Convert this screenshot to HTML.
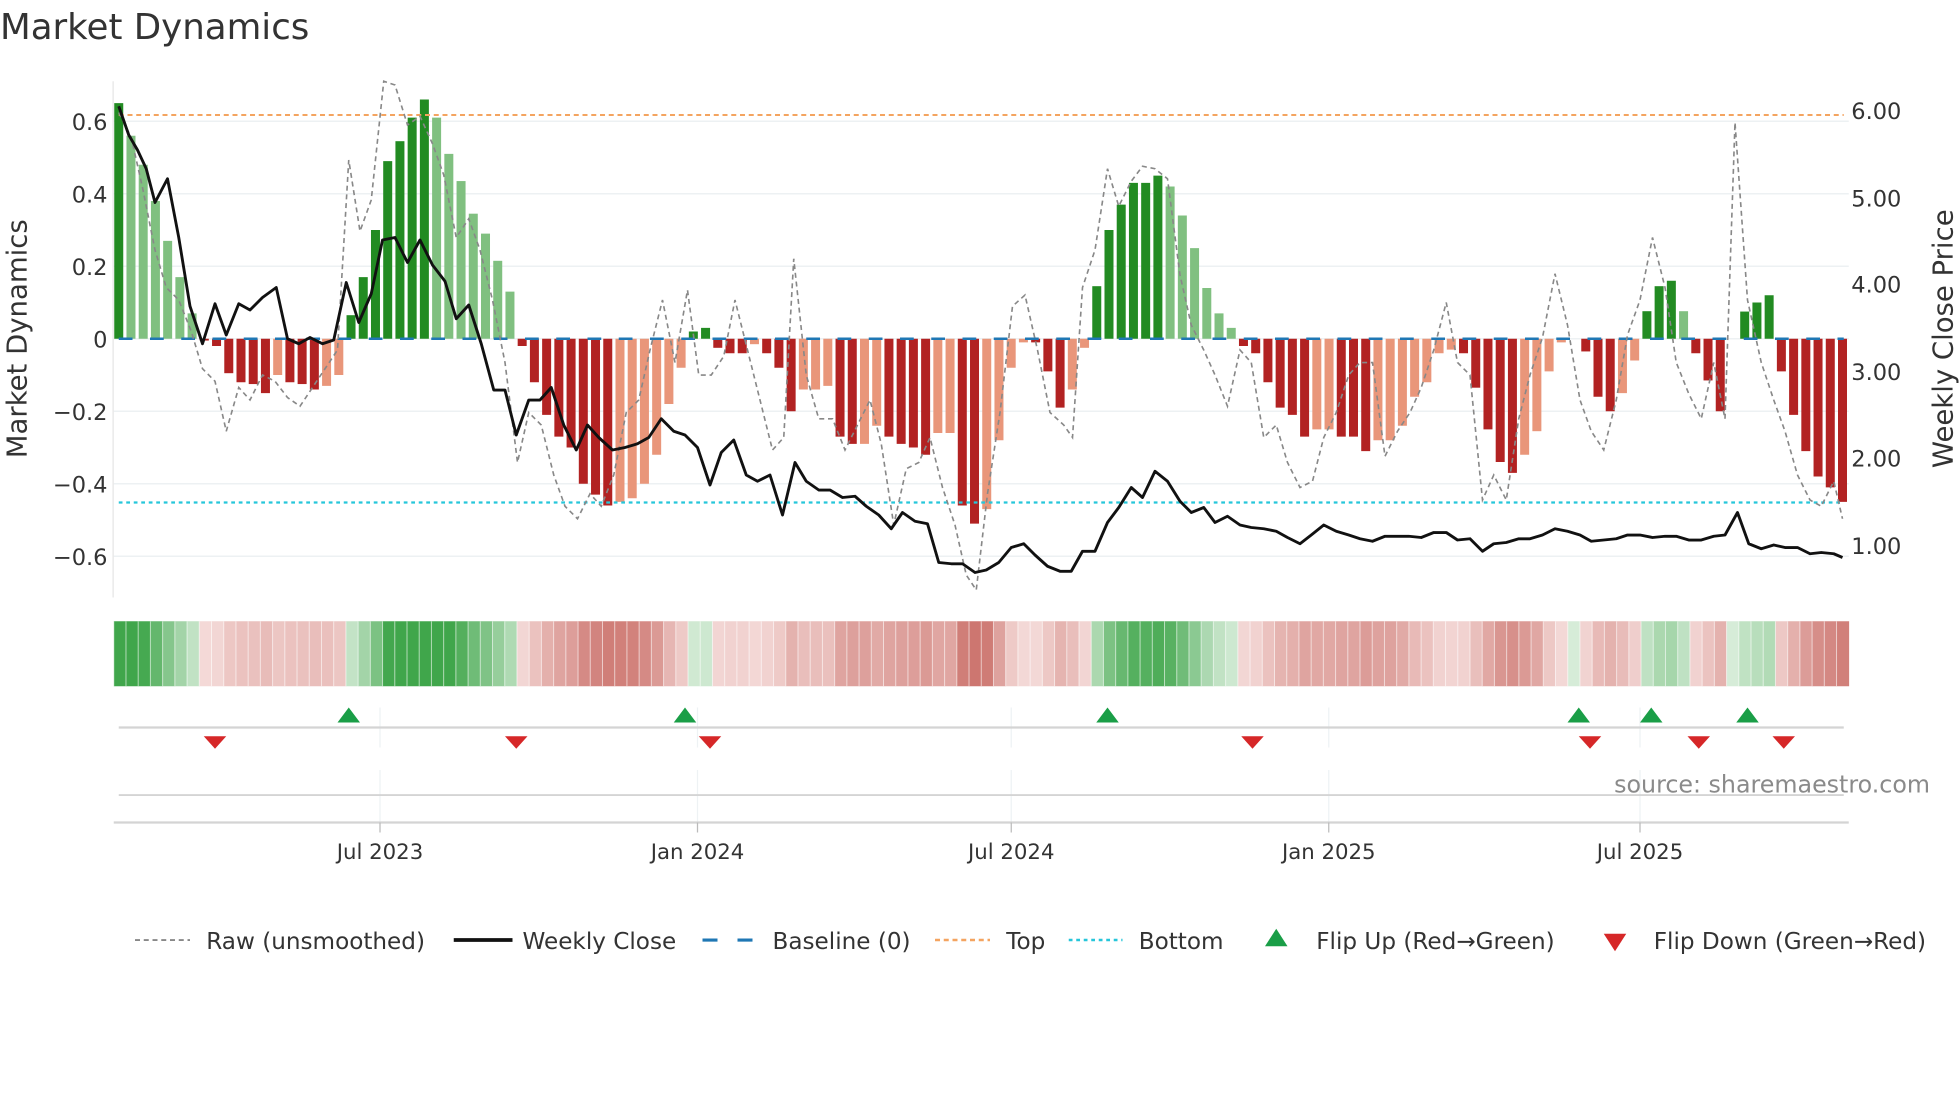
<!DOCTYPE html>
<html><head><meta charset="utf-8">
<style>
html,body{margin:0;padding:0;background:#fff;}
svg{display:block;}
text{font-family:"DejaVu Sans","Liberation Sans",sans-serif;fill:#333;}
</style></head>
<body>
<svg id="s" width="1960" height="1102" viewBox="0 0 1568 881.6" xmlns="http://www.w3.org/2000/svg">
<text x="0" y="31" font-size="28.5">Market Dynamics</text>
<g id="grid"></g>
<line x1="90.5" y1="65" x2="90.5" y2="478" stroke="#e6e6e6" stroke-width="1"/>
<g id="bars"></g>
<line x1="95" y1="92" x2="1475" y2="92" stroke="#f4a460" stroke-width="1.6" stroke-dasharray="4,3"/>
<line x1="95" y1="402" x2="1475" y2="402" stroke="#26c6da" stroke-width="1.8" stroke-dasharray="3,3"/>
<line x1="95" y1="271" x2="1475" y2="271" stroke="#1f77b4" stroke-width="2" stroke-dasharray="11,14"/>
<polyline id="raw" fill="none" stroke="#888" stroke-width="1.3" stroke-dasharray="4,3"/>
<polyline id="close" fill="none" stroke="#111" stroke-width="2.3" stroke-linejoin="round"/>
<g font-size="18" text-anchor="end">
<text x="86" y="104">0.6</text><text x="86" y="162">0.4</text><text x="86" y="220">0.2</text>
<text x="86" y="278">0</text><text x="86" y="336">−0.2</text><text x="86" y="394">−0.4</text><text x="86" y="452">−0.6</text>
</g>
<g font-size="18">
<text x="1481" y="95">6.00</text><text x="1481" y="165">5.00</text><text x="1481" y="234">4.00</text>
<text x="1481" y="304">3.00</text><text x="1481" y="373">2.00</text><text x="1481" y="443">1.00</text>
</g>
<text transform="translate(21,271) rotate(-90)" font-size="22" text-anchor="middle">Market Dynamics</text>
<text transform="translate(1562,271) rotate(-90)" font-size="22" text-anchor="middle">Weekly Close Price</text>
<g id="heat"></g>
<g stroke="#eef2f4" stroke-width="1">
<line x1="304" y1="566" x2="304" y2="598"/><line x1="558" y1="566" x2="558" y2="598"/><line x1="809" y1="566" x2="809" y2="598"/><line x1="1063" y1="566" x2="1063" y2="598"/><line x1="1312" y1="566" x2="1312" y2="598"/>
<line x1="304" y1="616" x2="304" y2="658"/><line x1="558" y1="616" x2="558" y2="658"/><line x1="809" y1="616" x2="809" y2="658"/><line x1="1063" y1="616" x2="1063" y2="658"/><line x1="1312" y1="616" x2="1312" y2="658"/>
</g>
<line x1="95" y1="582" x2="1475" y2="582" stroke="#d4d4d4" stroke-width="1.8"/>
<line x1="95" y1="636" x2="1475" y2="636" stroke="#d4d4d4" stroke-width="1.5"/>
<line x1="91" y1="658" x2="1479" y2="658" stroke="#d4d4d4" stroke-width="1.8"/>
<g stroke="#bbb" stroke-width="1">
<line x1="304" y1="658" x2="304" y2="666"/><line x1="558" y1="658" x2="558" y2="666"/><line x1="809" y1="658" x2="809" y2="666"/><line x1="1063" y1="658" x2="1063" y2="666"/><line x1="1312" y1="658" x2="1312" y2="666"/>
</g>
<g id="flips"></g>
<text x="1544" y="634" font-size="19" text-anchor="end" style="fill:#8a8a8a">source: sharemaestro.com</text>
<g font-size="17" text-anchor="middle">
<text x="304" y="687">Jul 2023</text><text x="558" y="687">Jan 2024</text><text x="809" y="687">Jul 2024</text><text x="1063" y="687">Jan 2025</text><text x="1312" y="687">Jul 2025</text>
</g>
<g font-size="18.5">
<line x1="108" y1="752" x2="152" y2="752" stroke="#888" stroke-width="1.5" stroke-dasharray="4,3"/>
<text x="165" y="759">Raw (unsmoothed)</text>
<line x1="363" y1="752" x2="410" y2="752" stroke="#111" stroke-width="3"/>
<text x="418" y="759">Weekly Close</text>
<line x1="562" y1="752" x2="606" y2="752" stroke="#1f77b4" stroke-width="2.5" stroke-dasharray="12,16"/>
<text x="618" y="759">Baseline (0)</text>
<line x1="748" y1="752" x2="792" y2="752" stroke="#f4a460" stroke-width="2" stroke-dasharray="4,3"/>
<text x="805" y="759">Top</text>
<line x1="855" y1="752" x2="898" y2="752" stroke="#26c6da" stroke-width="2" stroke-dasharray="3,3"/>
<text x="911" y="759">Bottom</text>
<polygon points="1021,743 1030,757 1012,757" fill="#1a9e47"/>
<text x="1053" y="759">Flip Up (Red→Green)</text>
<polygon points="1283,747 1301,747 1292,761" fill="#d62728"/>
<text x="1323" y="759">Flip Down (Green→Red)</text>
</g>
</svg>
<script>
(function(){
var NS="http://www.w3.org/2000/svg";
function el(t,a,p){var e=document.createElementNS(NS,t);for(var k in a)e.setAttribute(k,a[k]);p.appendChild(e);return e;}
var g=document.getElementById('grid');
[97,155,213,271,329,387,445].forEach(function(y){el('line',{x1:91,x2:1479,y1:y,y2:y,stroke:'#edf1f3','stroke-width':1.2},g);});
var V=[[.65,0],[.56,1],[.48,1],[.38,1],[.27,1],[.17,1],[.07,1],[-.005,0],[-.02,0],[-.095,0],[-.12,0],[-.125,0],[-.15,0],[-.10,1],[-.12,0],[-.125,0],[-.14,0],[-.13,1],[-.10,1],
[.065,0],[.17,0],[.30,0],[.49,0],[.545,0],[.61,0],[.66,0],[.61,1],[.51,1],[.435,1],[.345,1],[.29,1],[.215,1],[.13,1],
[-.02,0],[-.12,0],[-.21,0],[-.27,0],[-.30,0],[-.40,0],[-.43,0],[-.46,0],[-.45,1],[-.44,1],[-.40,1],[-.32,1],[-.18,1],[-.08,1],
[.02,0],[.03,0],[-.025,0],[-.04,0],[-.04,0],[-.015,1],[-.04,0],[-.08,0],[-.2,0],[-.14,1],[-.14,1],[-.13,1],[-.27,0],[-.29,0],[-.29,1],[-.24,1],
[-.27,0],[-.29,0],[-.30,0],[-.32,0],[-.26,1],[-.26,1],[-.46,0],
[-.51,0],[-.47,1],[-.28,1],[-.08,1],[-.01,1],[-.01,0],[-.09,0],[-.19,0],[-.14,1],[-.025,1],[.145,0],[.30,0],[.37,0],[.43,0],[.43,0],[.45,0],[.42,1],[.34,1],[.25,1],[.14,1],[.07,1],[.03,1],
[-.02,0],[-.04,0],[-.12,0],[-.19,0],[-.21,0],[-.27,0],[-.25,1],[-.25,1],[-.27,0],[-.27,0],[-.31,0],[-.28,1],[-.28,1],[-.24,1],[-.16,1],[-.12,1],[-.04,1],[-.03,1],
[-.04,0],[-.135,0],[-.25,0],[-.34,0],[-.37,0],[-.32,1],[-.255,1],[-.09,1],[-.01,1],[0,1],[-.035,0],[-.16,0],[-.20,0],[-.15,1],[-.06,1],
[.076,0],[.145,0],[.16,0],[.076,1],[-.04,0],[-.115,0],[-.2,0],[0,0],[.075,0],[.10,0],[.12,0],[-.09,0],[-.21,0],[-.31,0],[-.38,0],[-.41,0],[-.45,0]];
var n=V.length, x0=95, x1=1474, sp=(x1-x0)/(n-1);
var b=document.getElementById('bars'), h=document.getElementById('heat');
function mix(a,c,t){return 'rgb('+[0,1,2].map(function(i){return Math.round(a[i]+(c[i]-a[i])*t);}).join(',')+')';}
var hx0=91, hw=(1479-91)/n;
V.forEach(function(d,i){
 var v=d[0],x=x0+sp*i,y0=271,y=271-290*v;
 var col=v>=0?(d[1]?'#80c080':'#228b22'):(d[1]?'#e9967a':'#b22222');
 if(Math.abs(v)>0.003) el('rect',{x:x-3.6,y:Math.min(y,y0),width:7.2,height:Math.abs(y-y0),fill:col},b);
 var t=Math.min(1,Math.abs(v)/0.5);
 var c=v>=0?mix([214,236,216],[64,166,75],t):mix([244,218,216],[205,118,112],t);
 el('rect',{x:hx0+hw*i,y:497,width:hw+0.3,height:52,fill:c},h);
 el('line',{x1:hx0+hw*i,x2:hx0+hw*i,y1:497,y2:549,stroke:'#fff','stroke-width':0.8,'stroke-opacity':0.6},h);
});
var C=[[95,85],[103,108],[110,120],[117,135],[124,162],[134,143],[143,190],[152,245],[162,275],[172,243],[181,268],[191,243],[200,248],[210,238],[221,230],[230,271],[239,275],[248,270],[258,275],[267,272],[277,226],[287,258],[297,235],[306,192],[316,190],[326,210],[336,192],[346,212],[356,225],[365,255],[375,244],[385,275],[395,312],[404,312],[413,348],[423,320],[432,320],[441,310],[451,340],[461,360],[470,340],[479,350],[490,360],[500,358],[510,355],[519,350],[529,335],[539,345],[548,348],[558,358],[568,388],[577,362],[587,352],[597,380],[606,385],[616,380],[626,412],[636,370],[645,385],[655,392],[664,392],[674,398],[684,397],[693,405],[703,412],[713,423],[722,410],[732,417],[742,419],[751,450],[761,451],[770,451],[780,458],[789,456],[799,450],[809,438],[819,435],[828,444],[838,453],[848,457],[857,457],[866,441],[876,441],[886,418],[895,406],[905,390],[914,398],[924,377],[934,385],[944,401],[953,410],[963,406],[972,418],[982,413],[992,420],[1001,422],[1011,423],[1021,425],[1030,430],[1040,435],[1049,428],[1059,420],[1069,425],[1079,428],[1088,431],[1098,433],[1108,429],[1118,429],[1127,429],[1137,430],[1147,426],[1157,426],[1166,432],[1176,431],[1186,441],[1195,435],[1205,434],[1215,431],[1224,431],[1234,428],[1244,423],[1254,425],[1264,428],[1273,433],[1283,432],[1293,431],[1302,428],[1312,428],[1322,430],[1332,429],[1341,429],[1351,432],[1361,432],[1371,429],[1380,428],[1390,410],[1399,435],[1409,439],[1419,436],[1428,438],[1438,438],[1448,443],[1457,442],[1467,443],[1474,446]];
document.getElementById('close').setAttribute('points',C.map(function(p){return p.join(',');}).join(' '));
var R=[[95,90],[105,110],[114,150],[124,200],[133,230],[143,240],[153,265],[162,295],[172,305],[181,345],[191,310],[200,320],[210,300],[220,305],[230,318],[240,325],[250,310],[260,295],[270,280],[279,128],[288,185],[297,160],[307,65],[316,68],[326,100],[336,93],[346,115],[355,140],[365,190],[375,175],[384,200],[394,240],[404,290],[414,370],[423,330],[433,340],[443,380],[452,405],[462,415],[472,395],[481,405],[491,380],[501,330],[511,320],[520,280],[530,240],[540,290],[550,232],[559,300],[569,300],[579,285],[588,240],[598,280],[608,320],[618,360],[627,350],[635,207],[645,300],[655,335],[666,335],[676,360],[686,340],[696,320],[705,355],[715,420],[725,375],[735,370],[744,350],[754,390],[764,420],[773,460],[781,472],[790,395],[800,330],[810,245],[820,236],[830,280],[840,330],[851,340],[858,350],[866,230],[876,200],[886,135],[895,165],[905,145],[914,133],[924,135],[934,143],[944,220],[953,260],[963,280],[972,300],[982,325],[992,280],[1001,290],[1011,350],[1021,340],[1030,370],[1040,390],[1050,385],[1059,350],[1069,330],[1079,300],[1088,290],[1098,290],[1108,365],[1118,345],[1128,330],[1137,310],[1147,280],[1157,242],[1166,290],[1176,300],[1186,400],[1195,380],[1205,400],[1215,335],[1224,300],[1234,270],[1244,219],[1254,260],[1264,320],[1273,345],[1283,360],[1293,320],[1302,268],[1312,240],[1322,190],[1332,230],[1341,290],[1351,315],[1361,335],[1371,290],[1380,335],[1388,98],[1398,240],[1409,290],[1419,320],[1428,345],[1438,380],[1448,400],[1457,405],[1467,385],[1474,415]];
document.getElementById('raw').setAttribute('points',R.map(function(p){return p.join(',');}).join(' '));
var f=document.getElementById('flips');
[279,548,886,1263,1321,1398].forEach(function(x){el('polygon',{points:(x)+',566 '+(x+9)+',578 '+(x-9)+',578',fill:'#1a9e47'},f);});
[172,413,568,1002,1272,1359,1427].forEach(function(x){el('polygon',{points:(x-9)+',589 '+(x+9)+',589 '+x+',599',fill:'#d62728'},f);});
})();
</script>
</body></html>
